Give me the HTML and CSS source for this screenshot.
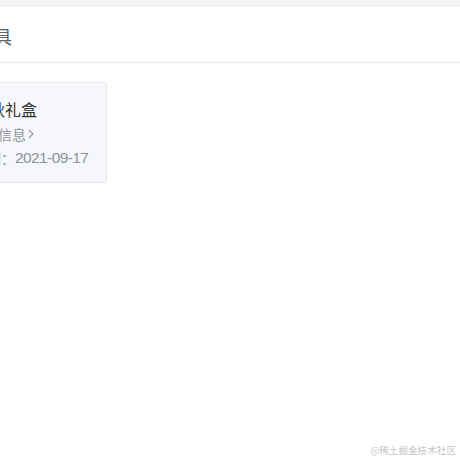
FILE: index.html
```html
<!DOCTYPE html>
<html lang="zh-CN">
<head>
<meta charset="utf-8">
<title>工具</title>
<link rel="stylesheet" href="styles.css">
</head>
<body>
<div class="topbar"></div>
<header class="header">
  <h1 class="header-title">工具</h1>
</header>
<main class="content">
  <section class="card">
    <div class="card-title">中秋礼盒</div>
    <a class="card-link" href="#">查看信息<svg class="chevron" width="6" height="10" viewBox="0 0 6 10"><polyline points="1,1 5,5 1,9" fill="none" stroke="#909399" stroke-width="1.1"/></svg></a>
    <div class="card-date"><span class="label">日期：</span><span class="date">2021-09-17</span></div>
  </section>
</main>
<div class="watermark">@稀土掘金技术社区</div>
</body>
</html>
```
FILE: styles.css
```css
html, body {
  margin: 0;
  padding: 0;
  background: #ffffff;
}
body {
  font-family: "Noto Sans CJK SC", "Noto Sans", sans-serif;
  height: 460px;
  overflow: hidden;
  position: relative;
}
.topbar {
  height: 7px;
  background: #f3f3f4;
}
.header {
  height: 55px;
  border-bottom: 1px solid #e8e9eb;
  display: flex;
  align-items: center;
}
.header-title {
  margin: 2px 0 0 -24px;
  font-size: 18px;
  font-weight: normal;
  line-height: 24px;
  color: #606266;
}
.content {
  padding-top: 19px;
}
.card {
  box-sizing: border-box;
  width: 155px;
  margin-left: -48px;
  padding: 15px 10px 14px 20px;
  background: #f5f7fa;
  border: 1px solid #e4e7ed;
  border-radius: 3px;
  display: flex;
  flex-direction: column;
  gap: 4px;
}
.card-title {
  font-size: 16px;
  line-height: 22px;
  color: #303133;
  white-space: nowrap;
}
.card-link {
  display: flex;
  align-items: center;
  margin-left: -3px;
  font-size: 14px;
  line-height: 20px;
  color: #909399;
  text-decoration: none;
  white-space: nowrap;
}
.chevron {
  margin-left: 2px;
}
.card-date {
  display: flex;
  align-items: center;
  line-height: 20px;
  color: #8c939d;
  white-space: nowrap;
}
.label {
  font-size: 14px;
}
.date {
  font-family: "Liberation Sans", Arial, sans-serif;
  font-size: 15.5px;
  letter-spacing: -0.6px;
}
.watermark {
  position: absolute;
  right: 4px;
  bottom: 4px;
  font-size: 9.6px;
  line-height: 12px;
  color: #c4c4c4;
}
```
